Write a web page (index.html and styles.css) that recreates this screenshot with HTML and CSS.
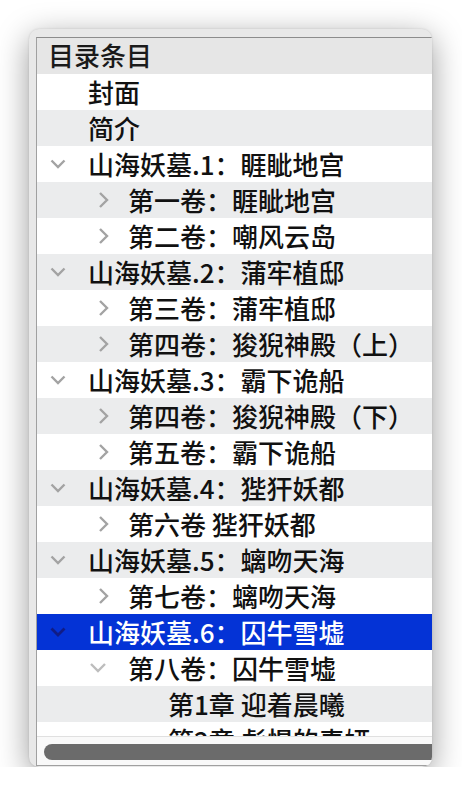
FILE: index.html
```html
<!DOCTYPE html>
<html lang="zh">

<head>
  <meta charset="UTF-8">
  <meta name="viewport" content="width=device-width, initial-scale=1.0">
  <title>目录条目</title>
  <link rel="stylesheet" href="styles.css">
</head>

<body>
  <div class="window">
    <div class="frame">
      <div class="head">目录条目</div>
      <div class="list">
        <div class="row l0"><span class="tw"></span><span>封面</span></div>
        <div class="row l0"><span class="tw"></span><span>简介</span></div>
        <div class="row l0"><span class="tw open"></span><span>山海妖墓.1：睚眦地宫</span></div>
        <div class="row l1"><span class="tw shut"></span><span>第一卷：睚眦地宫</span></div>
        <div class="row l1"><span class="tw shut"></span><span>第二卷：嘲风云岛</span></div>
        <div class="row l0"><span class="tw open"></span><span>山海妖墓.2：蒲牢植邸</span></div>
        <div class="row l1"><span class="tw shut"></span><span>第三卷：蒲牢植邸</span></div>
        <div class="row l1"><span class="tw shut"></span><span>第四卷：狻猊神殿（上）</span></div>
        <div class="row l0"><span class="tw open"></span><span>山海妖墓.3：霸下诡船</span></div>
        <div class="row l1"><span class="tw shut"></span><span>第四卷：狻猊神殿（下）</span></div>
        <div class="row l1"><span class="tw shut"></span><span>第五卷：霸下诡船</span></div>
        <div class="row l0"><span class="tw open"></span><span>山海妖墓.4：狴犴妖都</span></div>
        <div class="row l1"><span class="tw shut"></span><span>第六卷 狴犴妖都</span></div>
        <div class="row l0"><span class="tw open"></span><span>山海妖墓.5：螭吻天海</span></div>
        <div class="row l1"><span class="tw shut"></span><span>第七卷：螭吻天海</span></div>
        <div class="row l0 selected"><span class="tw open"></span><span>山海妖墓.6：囚牛雪墟</span></div>
        <div class="row l1"><span class="tw open light"></span><span>第八卷：囚牛雪墟</span></div>
        <div class="row l2"><span class="tw"></span><span>第1章 迎着晨曦</span></div>
        <div class="row l2"><span class="tw"></span><span>第2章 彪悍的麦娅</span></div>
      </div>
      <div class="scroll">
        <div class="thumb"></div>
      </div>
    </div>
  </div>
</body>

</html>
```

FILE: styles.css
```css
body {
  margin: 0;
  background: #fff;
  font-family: "Noto Sans CJK SC", "Noto Sans", sans-serif;
  color: #111;
}

.window {
  margin: 29px 0 0 29px;
  width: 403px;
  height: 738px;
  box-sizing: border-box;
  padding: 8px 0 0 7px;
  background: #e8e8e8;
  border-radius: 10px;
  box-shadow: 0 8px 32px rgba(0, 0, 0, 0.4), 0 0 2px rgba(0, 0, 0, 0.15);
  overflow: hidden;
}

.frame {
  border: 1px solid #a0a0a0;
  border-top-color: #8c8c8c;
  border-right: none;
  background: #fff;
}

.head {
  height: 36px;
  line-height: 34px;
  padding-left: 11px;
  font-size: 26px;
  font-weight: 500;
  background: #e6e6e6;
  color: #1a1a1a;
}

.list {
  height: 662px;
  overflow: hidden;
}

.row {
  display: flex;
  align-items: center;
  box-sizing: border-box;
  height: 36px;
  padding-bottom: 2px;
  font-size: 26px;
  font-weight: 500;
  white-space: nowrap;
  padding-left: 9px;

  &:nth-child(even) {
    background: #ebeced;
  }
}

.l1 {
  padding-left: 49px;
}

.l2 {
  padding-left: 89px;
}

.tw {
  flex: none;
  width: 24px;
  height: 34px;
  margin-top: 2px;
  margin-right: 18px;
  background-repeat: no-repeat;
  background-position: center;
}

.open {
  background-image: url("data:image/svg+xml,%3Csvg xmlns='http://www.w3.org/2000/svg' width='16' height='10' viewBox='0 0 16 10'%3E%3Cpath d='M1.5 1.5l6.5 6.5 6.5-6.5' fill='none' stroke='%23a3a3a3' stroke-width='2.4'/%3E%3C/svg%3E");
}

.light {
  background-image: url("data:image/svg+xml,%3Csvg xmlns='http://www.w3.org/2000/svg' width='18' height='12' viewBox='0 0 18 12'%3E%3Cpath d='M2 2l7 7 7-7' fill='none' stroke='%23bdbdbd' stroke-width='2.4'/%3E%3C/svg%3E");
}

.shut {
  background-image: url("data:image/svg+xml,%3Csvg xmlns='http://www.w3.org/2000/svg' width='11' height='18' viewBox='0 0 11 18'%3E%3Cpath d='M2 2l7 7-7 7' fill='none' stroke='%23a3a3a3' stroke-width='2.4'/%3E%3C/svg%3E");
  background-position: 12px center;
}

.row.selected {
  background: #0433d6;
  color: #fff;

  & .open {
    background-image: url("data:image/svg+xml,%3Csvg xmlns='http://www.w3.org/2000/svg' width='16' height='10' viewBox='0 0 16 10'%3E%3Cpath d='M1.5 1.5l6.5 6.5 6.5-6.5' fill='none' stroke='%23101c86' stroke-width='2.8'/%3E%3C/svg%3E");
  }
}

.scroll {
  border-top: 1px solid #e0e0e0;
  background: #f9f9f9;
  padding: 7px 0 0 7px;
  height: 21px;
}

.thumb {
  height: 16px;
  background: #6b6b6b;
  border-radius: 8px 0 0 8px;
}
```
